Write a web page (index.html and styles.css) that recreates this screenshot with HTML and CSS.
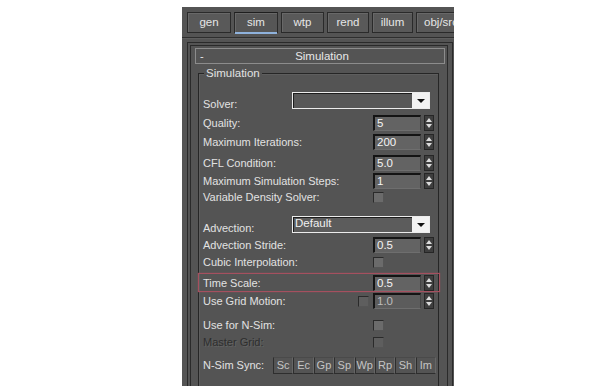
FILE: index.html
```html
<!DOCTYPE html>
<html>
<head>
<meta charset="utf-8">
<link rel="stylesheet" href="styles.css">
</head>
<body>
<div class="panel">
  <div class="tabs">
    <div class="tab w44">gen</div>
    <div class="tab w44 active">sim</div>
    <div class="tab w43">wtp</div>
    <div class="tab w42">rend</div>
    <div class="tab w41">illum</div>
    <div class="tab w50">obj/src</div>
  </div>
  <div class="sep"></div>
  <div class="outer">
    <div class="rollout">
      <div class="header"><span class="minus">-</span><span class="htitle">Simulation</span></div>
      <div class="group">
        <span class="legend">Simulation</span>
        <div class="rows">
          <div class="row drop-row h17 mt18">
            <span class="label fixed">Solver:</span>
            <div class="dropdown"><span class="dtext"></span><span class="darrow"></span></div>
          </div>
          <div class="row h16 mt6">
            <span class="label">Quality:</span>
            <div class="ctrl"><div class="field">5</div><span class="spin"></span></div>
          </div>
          <div class="row h16 mt3">
            <span class="label">Maximum Iterations:</span>
            <div class="ctrl"><div class="field">200</div><span class="spin"></span></div>
          </div>
          <div class="row h16 mt5">
            <span class="label">CFL Condition:</span>
            <div class="ctrl"><div class="field">5.0</div><span class="spin"></span></div>
          </div>
          <div class="row h16 mt2">
            <span class="label">Maximum Simulation Steps:</span>
            <div class="ctrl"><div class="field">1</div><span class="spin"></span></div>
          </div>
          <div class="row h15 mt1">
            <span class="label">Variable Density Solver:</span>
            <div class="ctrl"><span class="check"></span></div>
          </div>
          <div class="row drop-row h17 mt11">
            <span class="label fixed">Advection:</span>
            <div class="dropdown light"><span class="dtext">Default</span><span class="darrow"></span></div>
          </div>
          <div class="row h16 mt4">
            <span class="label">Advection Stride:</span>
            <div class="ctrl"><div class="field">0.5</div><span class="spin"></span></div>
          </div>
          <div class="row h15 mt2">
            <span class="label">Cubic Interpolation:</span>
            <div class="ctrl"><span class="check"></span></div>
          </div>
          <div class="row h16 mt5 marked">
            <span class="label">Time Scale:</span>
            <div class="ctrl"><div class="field">0.5</div><span class="spin"></span></div>
          </div>
          <div class="row h16 mt2">
            <span class="label">Use Grid Motion:</span>
            <span class="check dark pre"></span>
            <div class="ctrl"><div class="field dim">1.0</div><span class="spin"></span></div>
          </div>
          <div class="row h15 mt9">
            <span class="label">Use for N-Sim:</span>
            <div class="ctrl"><span class="check"></span></div>
          </div>
          <div class="row h15 mt2">
            <span class="label disabled">Master Grid:</span>
            <div class="ctrl"><span class="check dark"></span></div>
          </div>
          <div class="row h17 mt7">
            <span class="label sync-label">N-Sim Sync:</span>
            <div class="sync">
              <span class="sbtn">Sc</span><span class="sbtn">Ec</span><span class="sbtn">Gp</span><span class="sbtn">Sp</span><span class="sbtn">Wp</span><span class="sbtn">Rp</span><span class="sbtn">Sh</span><span class="sbtn">Im</span>
            </div>
          </div>
        </div>
      </div>
    </div>
  </div>
</div>
</body>
</html>
```
FILE: styles.css
```css
* { box-sizing: border-box; }
html, body { margin: 0; padding: 0; background: #ffffff; }
body {
  font-family: "Liberation Sans", Arial, sans-serif;
  font-size: 11px;
  color: #e2e2e2;
}
.panel {
  margin: 7px 0 0 182px;
  width: 272px;
  height: 379px;
  background: #545454;
  overflow: hidden;
  padding-top: 5px;
}
.tabs {
  display: flex;
  gap: 3px;
  padding-left: 5px;
  height: 21px;
}
.tab {
  flex: none;
  height: 21px;
  line-height: 19px;
  text-align: center;
  border: 1px solid #2a2a2a;
  background: #595959;
  box-shadow: inset 1px 1px 0 #686868;
  color: #e6e6e6;
  font-size: 11.5px;
  position: relative;
  white-space: nowrap;
}
.tab.active {
  border-top-color: #1e1e1e;
  background: #565656;
}
.tab.active::after {
  content: "";
  position: absolute;
  left: 0; right: 0; bottom: -2px;
  height: 2px;
  background: #8fb2dc;
}
.w44 { width: 44px; }
.w43 { width: 43px; }
.w42 { width: 42px; }
.w41 { width: 41px; }
.w50 { width: 50px; }
.sep {
  margin-top: 4px;
  height: 2px;
  border-top: 1px solid #2e2e2e;
  border-bottom: 1px solid #5e5e5e;
}
.outer {
  margin: 3px 0 0 5px;
  width: 266px;
  height: 400px;
  border: 1px solid #2a2a2a;
  border-bottom: none;
}
.rollout {
  margin: 2px 0 0 2px;
  width: 258px;
  height: 400px;
  border: 1px solid #2a2a2a;
  border-bottom: none;
}
.header {
  margin: 2px 0 0 4px;
  width: 250px;
  height: 16px;
  border: 1px solid #8c8c8c;
  display: flex;
  align-items: center;
  position: relative;
  color: #e8e8e8;
}
.minus { padding-left: 4px; width: 0; }
.htitle { flex: 1; text-align: center; font-size: 11.5px; }
.group {
  position: relative;
  margin: 9px 0 0 7px;
  width: 241px;
  height: 400px;
  border: 1px solid #262626;
  border-bottom: none;
  box-shadow: inset 1px 1px 0 #5e5e5e;
  padding: 0 4px;
}
.legend {
  position: absolute;
  left: 5px;
  top: -8px;
  padding: 0 2px;
  background: #545454;
  line-height: 14px;
  font-size: 11.5px;
}
.rows { display: flex; flex-direction: column; }
.row {
  display: flex;
  align-items: center;
  width: 231px;
  position: relative;
}
.h15 { height: 15px; }
.h16 { height: 16px; }
.h17 { height: 17px; }
.mt1 { margin-top: 1px; }
.mt2 { margin-top: 2px; }
.mt3 { margin-top: 3px; }
.mt4 { margin-top: 4px; }
.mt5 { margin-top: 5px; }
.mt6 { margin-top: 6px; }
.mt7 { margin-top: 7px; }
.mt9 { margin-top: 9px; }
.mt11 { margin-top: 11px; }
.mt18 { margin-top: 18px; }
.label {
  flex: 1;
  white-space: nowrap;
  line-height: 13px;
}
.label.fixed { flex: none; width: 89px; }
.drop-row { align-items: stretch; }
.drop-row .label { align-self: flex-end; margin-bottom: -2px; }
.label.disabled {
  color: #2e2e2e;
  text-shadow: 1px 1px 0 rgba(255,255,255,0.1);
}
.dropdown {
  width: 138px;
  height: 17px;
  display: flex;
  border: 1px solid #ececec;
  background: #585858;
  box-shadow: inset 1px 1px 0 #1c1c1c;
}
.dropdown.light { background: #5c5c5c; }
.dtext {
  flex: 1;
  padding-left: 2px;
  line-height: 13px;
  color: #f0f0f0;
  font-size: 11.5px;
}
.darrow {
  width: 17px;
  background: #f2f2f2;
  position: relative;
}
.darrow::after {
  content: "";
  position: absolute;
  left: 5px;
  top: 6px;
  border-left: 4px solid transparent;
  border-right: 4px solid transparent;
  border-top: 4px solid #111;
}
.ctrl {
  flex: none;
  width: 61px;
  display: flex;
  align-items: center;
  gap: 3px;
}
.field {
  width: 48px;
  height: 16px;
  background: #636363;
  border-top: 2px solid #141414;
  border-left: 2px solid #141414;
  border-right: 1px solid #444;
  border-bottom: 1px solid #6e6e6e;
  padding-left: 2px;
  line-height: 12px;
  color: #f4f4f4;
  font-size: 11.5px;
}
.field.dim { color: #bdbdbd; background: #5c5c5c; }
.spin {
  width: 10px;
  height: 16px;
  background: #3e3e3e;
  border: 1px solid #262626;
  position: relative;
}
.spin::before, .spin::after {
  content: "";
  position: absolute;
  left: 1px;
  border-left: 3px solid transparent;
  border-right: 3px solid transparent;
}
.spin::before { top: 2px; border-bottom: 4px solid #dcdcdc; }
.spin::after { bottom: 2px; border-top: 4px solid #dcdcdc; }
.check {
  width: 11px;
  height: 11px;
  background: #6b6b6b;
  border-top: 1px solid #2a2a2a;
  border-left: 1px solid #2a2a2a;
  border-right: 1px solid #555;
  border-bottom: 1px solid #555;
}
.check.dark { background: #5e5e5e; }
.check.pre { margin-right: 4px; }
.marked::after {
  content: "";
  position: absolute;
  left: -5px;
  right: -6px;
  top: -2px;
  bottom: -1px;
  border: 1px solid #a5505f;
  box-shadow: 0 0 1px #a5505f;
  pointer-events: none;
}
.sync-label { flex: none; width: 70px; }
.sync {
  flex: none;
  width: 163px;
  height: 17px;
  display: grid;
  grid-template-columns: repeat(8, 1fr);
  margin-right: -2px;
}
.sbtn {
  border-left: 1px solid #2e2e2e;
  border-bottom: 1px solid #2e2e2e;
  border-top: 1px solid #4a4a4a;
  border-right: 1px solid #666;
  text-align: center;
  line-height: 15px;
  color: #c4c4c4;
}
```
